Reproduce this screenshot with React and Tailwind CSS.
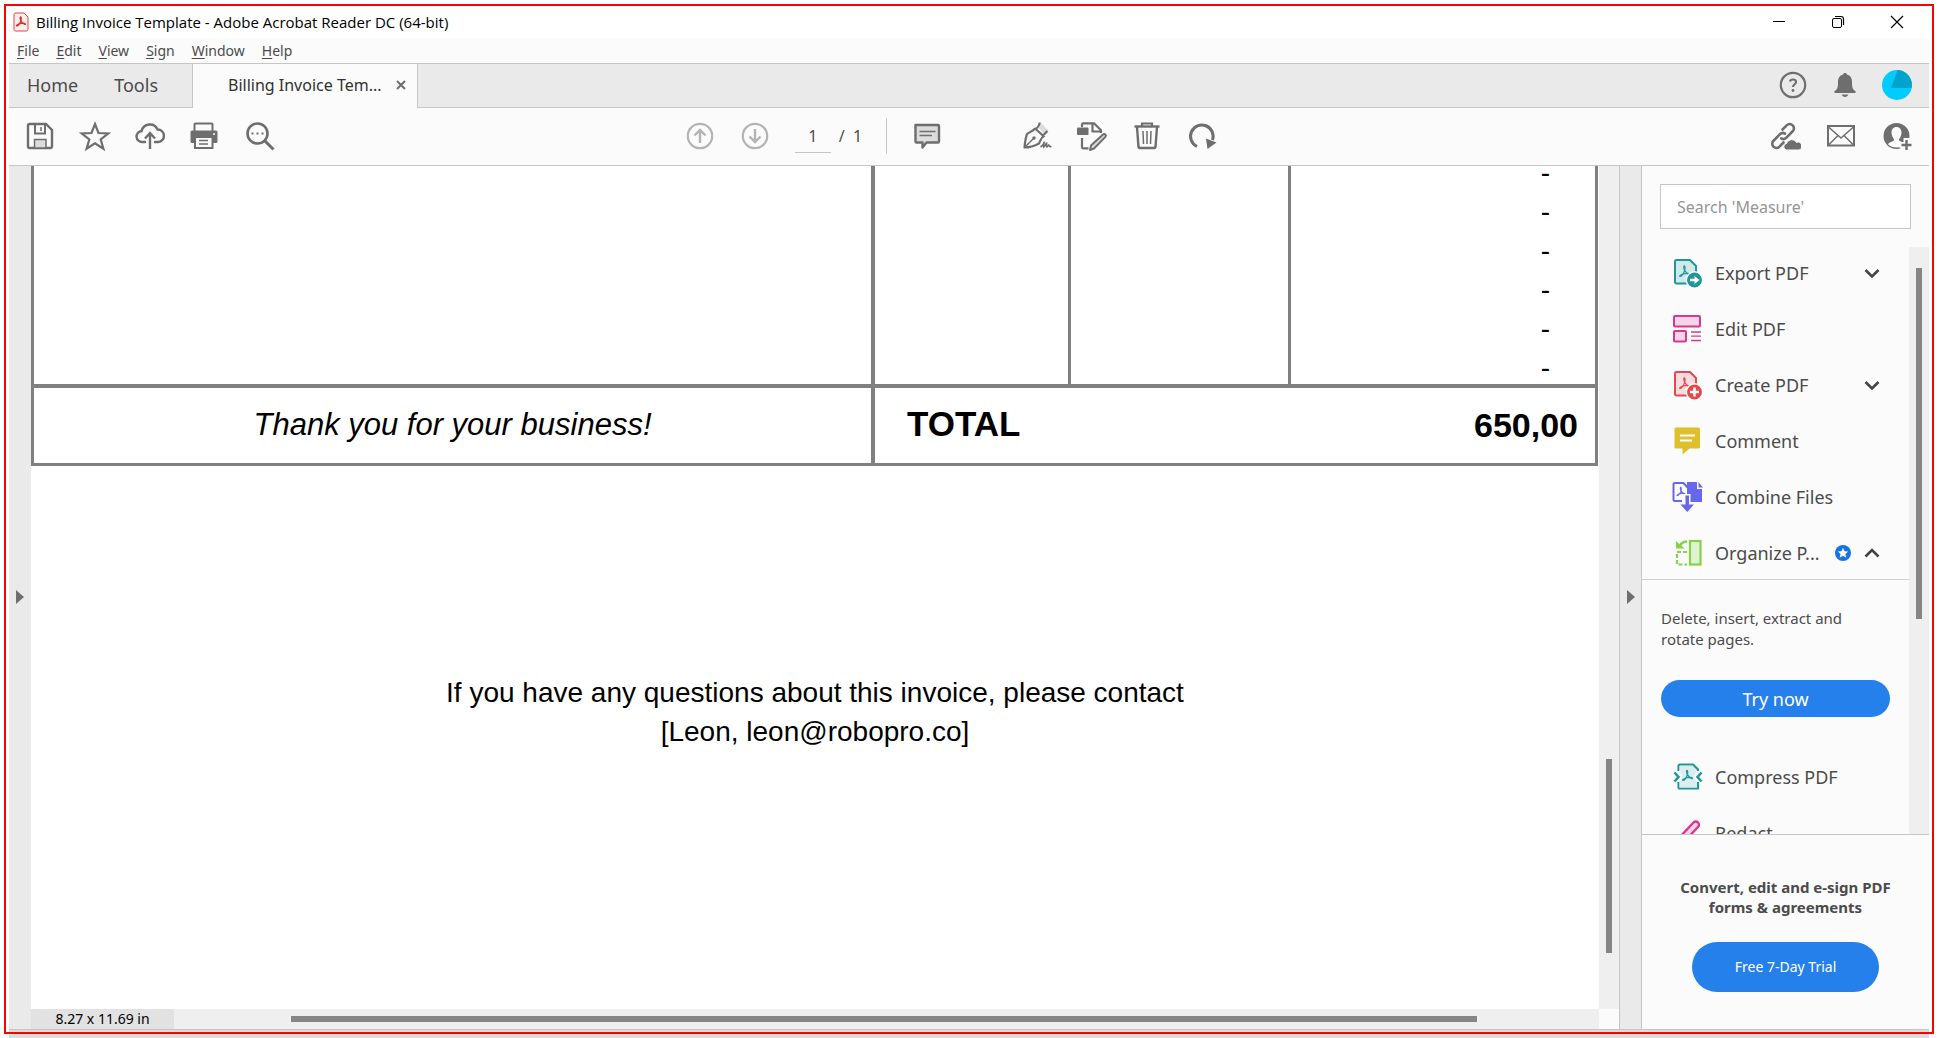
import React from "react";

const Svg = ({ size = 32, children, className = "" }) => (
  <svg
    width={size}
    height={size}
    viewBox={`0 0 ${size} ${size}`}
    fill="none"
    stroke="currentColor"
    strokeWidth="2"
    className={`shrink-0 ${className}`}
    aria-hidden="true"
  >
    {children}
  </svg>
);

const Trefoil = ({ x = 0, y = 0, s = 1, width = 1.5 }) => (
  <path
    transform={`translate(${x} ${y}) scale(${s})`}
    strokeWidth={width}
    strokeLinejoin="round"
    strokeLinecap="round"
    d="M5.6 0.5C4.6 0.6 5.2 3.4 6 5.2C4.8 8.4 2.6 11.6 0.9 11.5C0 10.9 3 9 6.2 8.5C8.6 8 11.6 8.2 11.5 9.3C10.8 10.4 7.6 7.8 6 5.2C6.4 3.4 6.6 0.6 5.6 0.5Z"
  />
);

/* ---------- toolbar icons ---------- */

const SaveIcon = () => (
  <Svg>
    <path d="M4 5.500A1.500 1.500 0 0 1 5.500 4H22l6 6v16.500A1.500 1.500 0 0 1 26.500 28h-21A1.500 1.500 0 0 1 4 26.500Z" strokeWidth="2.400" />
    <path d="M11 4v9.500h10V4" />
    <path d="M17 7v4" strokeWidth="1.500" />
    <path d="M10.500 28v-8.500h11.500V28Z" fill="#dcdcdc" strokeWidth="1.500" />
  </Svg>
);

const StarIcon = () => (
  <Svg>
    <path d="M16 4l3.500 9 10 .4-7.800 6.100 2.700 9.300L16 23.400l-8.400 5.400 2.700-9.300-7.800-6.100 10-.4Z" strokeWidth="2.200" />
  </Svg>
);

const CloudUpIcon = () => (
  <Svg>
    <path d="M11 22H8.500A5.500 5.500 0 0 1 7.600 11A8.500 8.500 0 0 1 23.600 9.500A6.200 6.200 0 0 1 23.800 22H21" strokeLinecap="round" strokeWidth="2.400" />
    <path d="M16 29V13.500M11 18.500l5-5.500 5 5.500" strokeWidth="2.400" />
  </Svg>
);

const PrinterIcon = () => (
  <Svg>
    <g transform="translate(-1 0)">
      <path d="M6.500 12V4.500a1 1 0 0 1 1-1h16a1 1 0 0 1 1 1V12" />
      <path d="M4 10.500h24a1.500 1.500 0 0 1 1.500 1.500v9.500a1.500 1.500 0 0 1-1.500 1.500H4A1.500 1.500 0 0 1 2.500 21.500V12A1.500 1.500 0 0 1 4 10.500Z" fill="currentColor" stroke="none" />
      <rect x="7" y="17" width="17.500" height="11" fill="#fbfbfb" />
      <path d="M11 20.500h9M11 24h9" strokeWidth="1.500" />
      <circle cx="26" cy="14" r="1" fill="#fbfbfb" stroke="none" />
    </g>
  </Svg>
);

const SearchDotsIcon = () => (
  <Svg>
    <circle cx="13.500" cy="13.500" r="10" strokeWidth="2.600" />
    <path d="M21 21l8.500 8.500" strokeWidth="3" />
    <path d="M7.500 13.500h2M12.500 13.500h2M17.500 13.500h2" />
  </Svg>
);

const ArrowCircle = ({ down }) => (
  <Svg>
    <circle cx="16" cy="16" r="12.200" strokeWidth="2.200" />
    <g transform={down ? "rotate(180 16 16)" : undefined}>
      <path d="M16 23V9.500M10.500 15.500L16 10l5.500 5.500" strokeWidth="2.400" />
    </g>
  </Svg>
);

const CommentIcon = () => (
  <Svg>
    <path d="M4.500 5h22.500a1 1 0 0 1 1 1v15.500a1 1 0 0 1-1 1H15.500L11.500 27.500V22.500H5.500a1 1 0 0 1-1-1Z" fill="#dcdcdc" strokeWidth="2.400" strokeLinejoin="round" />
    <path d="M8.500 11.500h16M8.500 15.500h12.500" strokeWidth="1.500" />
  </Svg>
);

const PenIcon = () => (
  <Svg>
    <path d="M20 3l7.500 7.500-4 3.500-6-6Z" fill="#dcdcdc" stroke="none" />
    <path d="M18.500 2.500C18.800 5 17 7 15 9M14 8.500C11.500 11.500 8.500 12 6 14C4.500 18 4 22 3.500 27.500C9 27.500 13.500 26 18 23.500C19.500 20.500 20 18 22.500 16M13.500 8l10 9M22 15.500l4.500-4.500" strokeWidth="2.200" strokeLinejoin="round" />
    <path d="M4 27l8.500-8.500" strokeWidth="1.500" />
    <circle cx="13" cy="18" r="1.700" fill="currentColor" stroke="none" />
    <path d="M19.500 27c2-1 3.500-3.500 3.800-5.500c-.3 2-.8 4-.6 5.500c1.500-1 2.500-3 3-4.500c-.2 2-.3 3.500.2 4.500c1-.5 1.500-1.500 2-2.500c0 1.500.5 2.500 2.600 2" strokeWidth="1.600" />
  </Svg>
);

const EditDocIcon = () => (
  <Svg>
    <rect x="1" y="7.500" width="11.500" height="7.500" rx="1" fill="currentColor" stroke="none" />
    <path d="M6 7V4.500A1.200 1.200 0 0 1 7.200 3.300H18l7 7V13M16.500 3.500V11.500H25M6 18v9.300a1 1 0 0 0 1 1h5.500" strokeLinejoin="round" strokeWidth="2.200" />
    <path d="M15 25.500l12-11a1.700 1.700 0 0 1 2.400 2.400L18 28.500l-4 1.500Z" strokeLinejoin="round" fill="#dcdcdc" />
  </Svg>
);

const TrashIcon = () => (
  <Svg>
    <path d="M3.500 6.500h25" strokeWidth="2.400" />
    <path d="M11 6V3.500h10V6" strokeWidth="2.200" />
    <path d="M6 7l1.500 20a1.200 1.200 0 0 0 1.200 1h14.600a1.200 1.200 0 0 0 1.200-1L26 7" strokeWidth="2.400" />
    <path d="M12 11l.5 13M16 11v13M20 11l-.5 13" strokeWidth="1.500" />
  </Svg>
);

const RotateIcon = () => (
  <Svg>
    <path d="M11 26.500A11.300 11.300 0 1 1 26.500 20" strokeWidth="3" />
    <path d="M20 18.500l10.500 4L21.500 29Z" fill="currentColor" stroke="none" />
  </Svg>
);

const LinkCloudIcon = () => (
  <Svg>
    <g strokeWidth="2.600" strokeLinecap="round">
      <path d="M13.500 9.500l4.200-4.200a4.200 4.200 0 0 1 6 0a4.200 4.200 0 0 1 0 6l-6.500 6.500a4.200 4.200 0 0 1-5 .6" />
      <path d="M14.500 22.500l-4 4.200a4.200 4.200 0 0 1-6 0a4.200 4.200 0 0 1 0-6l6.500-6.500a4.200 4.200 0 0 1 5-.6" />
    </g>
    <path d="M17.500 30a3.300 3.300 0 0 1 0-6.500a5.500 5.500 0 0 1 10-1.200a4 4 0 0 1 2.500 7.700Z" fill="currentColor" stroke="#fbfbfb" strokeWidth="1" />
  </Svg>
);

const MailIcon = () => (
  <Svg>
    <rect x="3" y="6" width="26" height="19.500" />
    <path d="M3.500 7l12.500 11L28.500 7M3.500 25l9.500-9.500M28.500 25L19 15.500" strokeWidth="1.500" />
  </Svg>
);

const UserPlusIcon = () => (
  <Svg>
    <circle cx="15.500" cy="16" r="13" fill="currentColor" stroke="none" />
    <path d="M15.500 7c3.300 0 5 2.500 5 5.700c0 2.500-1.200 4.800-2.300 6.200c-.5 1.200.2 1.800 1.200 2.300c2 .9 4 1.600 4.600 3A12.500 12.500 0 0 1 7 24.200c.6-1.400 2.600-2.100 4.600-3c1-.5 1.700-1.100 1.200-2.300c-1.100-1.400-2.300-3.700-2.300-6.200C10.500 9.500 12.200 7 15.500 7Z" fill="#fbfbfb" stroke="none" />
    <path d="M25.500 18v14M18.500 25h13" stroke="#fbfbfb" strokeWidth="6" />
    <path d="M25.500 20v10M20.500 25h10" strokeWidth="2.400" />
  </Svg>
);

/* ---------- side panel icons ---------- */

const Doc = ({ fill }) => (
  <>
    <path d="M3 4.500A1.500 1.500 0 0 1 4.500 3H18l6 6v17.500H4.500A1.500 1.500 0 0 1 3 25Z" fill={fill} strokeLinejoin="round" />
    <Trefoil x={7} y={8.500} s={0.95} width={1.300} />
  </>
);

const ExportIcon = () => (
  <Svg className="text-[#1f979b]">
    <Doc fill="#d0e9e9" />
    <circle cx="22.500" cy="23" r="8.200" fill="currentColor" stroke="#fbfbfb" strokeWidth="1.500" />
    <path d="M18 21.700h4.500v-2.700l5 4-5 4v-2.700H18Z" fill="#fff" stroke="none" />
  </Svg>
);

const CreateIcon = () => (
  <Svg className="text-[#e34850]">
    <Doc fill="#f9dcdd" />
    <circle cx="22.500" cy="23" r="8.200" fill="currentColor" stroke="#fbfbfb" strokeWidth="1.500" />
    <path d="M22.500 18.500v9M18 23h9" stroke="#fff" strokeWidth="2.400" />
  </Svg>
);

const EditIcon = () => (
  <Svg className="text-[#d83790]">
    <rect x="2" y="3" width="26" height="10.500" rx="1" fill="#f6d3e6" />
    <rect x="2" y="18" width="12" height="10.500" rx="1" fill="#f6d3e6" />
    <path d="M19 19h10M19 23.200h10M19 27.500h10" strokeWidth="1.300" />
  </Svg>
);

const CommentToolIcon = () => (
  <Svg className="text-[#dfbf2c]">
    <path d="M4 2.500h22.500A1.500 1.500 0 0 1 28 4v18a1.500 1.500 0 0 1-1.500 1.500H17.500L10.500 29.500V23.500H4A1.500 1.500 0 0 1 2.500 22V4A1.500 1.500 0 0 1 4 2.500Z" fill="currentColor" stroke="none" />
    <path d="M8 10.500h15M8 15.500h12" stroke="#fff" />
  </Svg>
);

const CombineIcon = () => (
  <Svg className="text-[#6767ec]">
    <g transform="translate(-1 0)">
      <path d="M16 1h10v7h5v13H19L16 10Z" fill="currentColor" stroke="none" />
      <path d="M27.500 1v5.500H32Z" fill="currentColor" stroke="none" />
      <path d="M11 20H4a1.500 1.500 0 0 1-1.500-1.500V3.500A1.500 1.500 0 0 1 4 2h8.500l4.500 5v7" fill="#fbfbfb" />
      <Trefoil x={5.500} y={6} s={0.75} width={1.500} />
      <path d="M12.500 13h7v9h5L16 32.500 7.500 22h5Z" fill="#fbfbfb" stroke="none" />
      <path d="M14.500 14.500h3.500v9h5L16.200 31 9.500 23.500h5Z" fill="currentColor" stroke="none" />
    </g>
  </Svg>
);

const OrganizeIcon = () => (
  <Svg className="text-[#87d14b]">
    <rect x="18" y="4" width="10.500" height="23.500" fill="#e0f3d0" strokeWidth="2.200" />
    <path d="M15 15H5v12.500h10" strokeDasharray="4 2" strokeWidth="2.200" />
    <path d="M15 4.500c-3.500 0-5.500 1.500-7 4" strokeWidth="2.600" />
    <path d="M4 4v7.500h8.500Z" fill="currentColor" stroke="none" />
  </Svg>
);

const CompressIcon = () => (
  <Svg className="text-[#1f979b]">
    <path d="M6.500 10V5A1.500 1.500 0 0 1 8 3.500h13l5 5V10M26 21v6.500H8A1.500 1.500 0 0 1 6.500 26v-5" strokeWidth="2.200" />
    <path d="M7.500 5h13l4.500 4.500L22 16l3 5v5.500H7.500V21l3-5-3-6Z" fill="#dbedee" stroke="none" />
    <Trefoil x={10} y={9} s={0.9} width={1.500} />
    <path d="M2.500 11.500l4 4.500-4 4.500M29.500 11.500l-4 4.500 4 4.500" strokeWidth="2.600" />
  </Svg>
);

const RedactIcon = () => (
  <Svg className="text-[#d83790]">
    <path d="M6 22L21.500 5.500a3 3 0 0 1 4.500 4.500L10.500 26.500 4.500 28Z" fill="#f6d3e6" strokeWidth="2.400" />
  </Svg>
);

const Chevron = ({ up }) => (
  <Svg size={16} className="text-[#444]">
    <path d={up ? "M1.500 11.500L8 5l6.500 6.500" : "M1.500 5L8 11.500 14.500 5"} strokeWidth="2.600" />
  </Svg>
);

const AppIcon = () => (
  <svg width="16" height="20" viewBox="0 0 16 20" fill="none" stroke="#e8403a" className="shrink-0" aria-hidden="true">
    <path d="M1 2.500A1.500 1.500 0 0 1 2.500 1H11l4 4v12.500a1.500 1.500 0 0 1-1.500 1.500h-11A1.500 1.500 0 0 1 1 17.500Z" fill="#fdeeee" />
    <g stroke="#e22a24">
      <Trefoil x={3} y={4.500} s={0.82} width={1.600} />
    </g>
  </svg>
);

const IconButton = ({ label, children, className = "" }) => (
  <button type="button" aria-label={label} className={`flex w-8 shrink-0 items-center justify-center ${className}`}>
    {children}
  </button>
);

const MENUS = ["File", "Edit", "View", "Sign", "Window", "Help"];

const Tool = ({ icon, label, children }) => (
  <li>
    <button type="button" className="flex h-14 w-full items-center text-left text-[18px] leading-6 text-[#4b4b4b]">
      {icon}
      <span className="ml-[11px] flex-1 whitespace-nowrap">{label}</span>
      {children}
    </button>
  </li>
);

function TitleBar() {
  return (
    <header className="flex h-8 shrink-0 items-center bg-white pr-4 pl-1">
      <AppIcon />
      <h1 className="ml-[7px] flex-1 font-['Open_Sans','Noto_Sans',sans-serif] text-[15px] leading-5 text-black">
        Billing Invoice Template - Adobe Acrobat Reader DC (64-bit)
      </h1>
      <div className="flex gap-[27px] text-black">
        <IconButton label="Minimize">
          <Svg size={16}><path d="M2 7.500h12" strokeWidth="1" /></Svg>
        </IconButton>
        <IconButton label="Restore">
          <Svg size={16}>
            <rect x="2.500" y="4.500" width="9" height="9" rx="1.500" strokeWidth="1" />
            <path d="M5 2.500h6a2.500 2.500 0 0 1 2.500 2.500v6" strokeWidth="1.200" />
          </Svg>
        </IconButton>
        <IconButton label="Close">
          <Svg size={16}><path d="M2 2l12 12M14 2L2 14" strokeWidth="1.200" /></Svg>
        </IconButton>
      </div>
    </header>
  );
}

function TabBar() {
  return (
    <div className="flex h-[45px] shrink-0 border-y border-[#c6c6c6] bg-[#eaeaea]">
      <nav className="flex w-[183px] items-center gap-9 pb-0.5 pl-[18px] text-[18px] leading-6 text-[#4b4b4b]">
        <button type="button">Home</button>
        <button type="button">Tools</button>
      </nav>
      <div className="-mb-px flex w-[226px] items-center border-x border-[#c6c6c6] bg-[#fbfbfb] pr-2.5 pb-0.5 pl-[35px]">
        <span className="flex-1 whitespace-nowrap text-[16px] leading-6 text-[#323232]">Billing Invoice Tem...</span>
        <button type="button" aria-label="Close tab" className="text-[#6e6e6e]">
          <Svg size={12}><path d="M2 2l8 8M10 2l-8 8" /></Svg>
        </button>
      </div>
      <div className="ml-auto flex items-center gap-5 pr-4 pb-px text-[#6e6e6e]">
        <IconButton label="Help">
          <Svg>
            <circle cx="16" cy="16" r="12.200" strokeWidth="2.200" />
            <path d="M13 12.500c.3-1.300 1.500-2 3-2s3 .9 3 2.500c0 2.300-3 2.300-3 5" strokeWidth="2.200" />
            <circle cx="16" cy="21.500" r="1.400" fill="currentColor" stroke="none" />
          </Svg>
        </IconButton>
        <IconButton label="Notifications">
          <Svg>
            <path d="M16 4c1.300 0 1.800.7 1.900 1.600C21.500 6.500 23 9.500 23 13c0 5.500.5 7.500 3.500 9v2h-21v-2C8.500 20.500 9 18.500 9 13c0-3.500 1.500-6.500 5.100-7.400C14.200 4.700 14.700 4 16 4ZM12.500 25.500h7c-.8 1.500-2 2.500-3.500 2.500s-2.700-1-3.500-2.500Z" fill="currentColor" stroke="none" />
          </Svg>
        </IconButton>
        <IconButton label="Account">
          <Svg>
            <circle cx="16" cy="16" r="15" fill="#00cdfd" stroke="none" />
            <path d="M16.500 1A15 15 0 0 1 30.500 19L28.500 19H10Z" fill="#00a3cb" stroke="none" />
          </Svg>
        </IconButton>
      </div>
    </div>
  );
}

function Toolbar() {
  return (
    <div className="flex h-[58px] shrink-0 items-center border-b border-[#c6c6c6] bg-[#fbfbfb] pr-4 pb-px pl-[15px] text-[#6e6e6e]">
      <div className="flex gap-[23px]">
        <IconButton label="Save"><SaveIcon /></IconButton>
        <IconButton label="Star"><StarIcon /></IconButton>
        <IconButton label="Upload"><CloudUpIcon /></IconButton>
        <IconButton label="Print"><PrinterIcon /></IconButton>
        <IconButton label="Find"><SearchDotsIcon /></IconButton>
      </div>
      <div className="grow-[409]" />
      <div className="flex items-center">
        <div className="flex gap-[23px] text-[#b4b4b4]">
          <IconButton label="Previous page"><ArrowCircle /></IconButton>
          <IconButton label="Next page"><ArrowCircle down /></IconButton>
        </div>
        <label className="ml-6 flex items-center text-[16px] leading-6 text-[#4b4b4b]">
          <input
            aria-label="Page number"
            defaultValue="1"
            className="h-[34px] w-9 border-b border-[#c6c6c6] bg-transparent text-center outline-none"
          />
          <span className="ml-2 w-[47px] whitespace-pre">/  1</span>
        </label>
        <div className="h-9 w-px bg-[#c6c6c6]" />
        <div className="ml-6"><IconButton label="Comment"><CommentIcon /></IconButton></div>
        <div className="ml-[78px] flex gap-[23px]">
          <IconButton label="Fill and sign"><PenIcon /></IconButton>
          <IconButton label="Edit document"><EditDocIcon /></IconButton>
          <IconButton label="Delete"><TrashIcon /></IconButton>
          <IconButton label="Rotate"><RotateIcon /></IconButton>
        </div>
      </div>
      <div className="grow-[553]" />
      <div className="flex gap-6">
        <IconButton label="Share link"><LinkCloudIcon /></IconButton>
        <IconButton label="Send by email"><MailIcon /></IconButton>
        <IconButton label="Invite people"><UserPlusIcon /></IconButton>
      </div>
    </div>
  );
}

function Invoice() {
  const amounts = ["-", "-", "-", "-", "-", "-"];
  return (
    <main className="min-h-0 flex-1 overflow-hidden bg-white font-['Liberation_Sans',Arial,sans-serif] text-black">
      <div className="-mt-4 pr-px">
        <table className="w-full table-fixed border-separate border-spacing-0 border-r-3 border-b-3 border-[#808080]">
          <colgroup>
            <col />
            <col className="w-[197px]" />
            <col className="w-[220px]" />
            <col className="w-[307px]" />
          </colgroup>
          <tbody>
            {amounts.map((amount, i) => (
              <tr key={i} className="h-[39px] text-[28px] leading-[33px]">
                <td className="border-l-3 border-[#808080] p-0" />
                <td className="border-l-4 border-[#808080] p-0" />
                <td className="border-l-3 border-[#808080] p-0" />
                <td className="border-l-3 border-[#808080] pt-1.5 pr-[45px] pb-0 pl-0 text-right">{amount}</td>
              </tr>
            ))}
            <tr className="h-[79px]">
              <td className="border-t-4 border-l-3 border-[#808080] px-0 pt-0 pb-0.5 text-center text-[31px] leading-9 italic">
                Thank you for your business!
              </td>
              <td colSpan={2} className="border-t-4 border-l-4 border-[#808080] pt-0 pr-0 pb-1 pl-8 text-[35px] leading-9 font-bold">
                TOTAL
              </td>
              <td className="border-t-4 border-[#808080] pt-0 pr-[17px] pb-0.5 pl-0 text-right text-[34px] leading-9 font-bold">
                650,00
              </td>
            </tr>
          </tbody>
        </table>
      </div>
      <p className="mt-[207px] text-center text-[28px] leading-[39px]">
        If you have any questions about this invoice, please contact
        <br />
        [Leon, leon@robopro.co]
      </p>
    </main>
  );
}

function SidePanel() {
  return (
    <aside className="flex w-[287px] shrink-0 flex-col bg-[#fbfbfb]">
      <div className="p-[18px]">
        <input
          type="search"
          aria-label="Search tools"
          placeholder="Search 'Measure'"
          className="h-[45px] w-full border border-[#c6c6c6] bg-white px-4 text-[16px] text-[#4b4b4b] outline-none placeholder:text-[#959595]"
        />
      </div>
      <div className="flex min-h-0 flex-1">
        <div className="min-w-0 flex-1 overflow-hidden">
          <ul className="-mt-0.5 border-b border-[#d0d0d0] pr-[29px] pl-[30px] [&>li:last-child]:-mb-0.5">
            <Tool icon={<ExportIcon />} label="Export PDF"><Chevron /></Tool>
            <Tool icon={<EditIcon />} label="Edit PDF" />
            <Tool icon={<CreateIcon />} label="Create PDF"><Chevron /></Tool>
            <Tool icon={<CommentToolIcon />} label="Comment" />
            <Tool icon={<CombineIcon />} label="Combine Files" />
            <Tool icon={<OrganizeIcon />} label="Organize P...">
              <Svg size={16} className="mr-[13px]">
                <circle cx="8" cy="8" r="8" fill="#1473e6" stroke="none" />
                <path d="M8 2.800l1.500 3.500 3.700.3-2.800 2.500.9 3.700L8 10.800l-3.300 2 .9-3.700L2.800 6.600l3.700-.3Z" fill="#fff" stroke="none" />
              </Svg>
              <Chevron up />
            </Tool>
          </ul>
          <div className="pt-7 pr-[19px] pb-8 pl-[19px]">
            <p className="text-[15px] leading-[21px] text-[#4b4b4b]">
              Delete, insert, extract and
              <br />
              rotate pages.
            </p>
            <button type="button" className="mt-[30px] h-[37px] w-full rounded-full bg-[#2680eb] text-[18px] leading-6 text-white">
              Try now
            </button>
          </div>
          <ul className="pr-[29px] pl-[30px]">
            <Tool icon={<CompressIcon />} label="Compress PDF" />
            <Tool icon={<RedactIcon />} label="Redact" />
          </ul>
        </div>
        <div className="flex w-5 shrink-0 justify-center bg-[#efefef] pt-[21px]">
          <div className="h-[62%] w-1.5 bg-[#858585]" />
        </div>
      </div>
      <section className="flex shrink-0 flex-col items-center border-t border-[#c6c6c6] pt-[42px] pb-[37px]">
        <p className="text-center text-[15px] leading-5 font-bold text-[#4b4b4b]">
          Convert, edit and e-sign PDF
          <br />
          forms &amp; agreements
        </p>
        <button type="button" className="mt-[25px] h-[50px] w-[187px] rounded-full bg-[#2680eb] text-[14px] leading-5 text-white">
          Free 7-Day Trial
        </button>
      </section>
    </aside>
  );
}

const Collapser = ({ label, className }) => (
  <button type="button" aria-label={label} className={`flex shrink-0 items-center justify-center bg-[#eaeaea] pb-0.5 ${className}`}>
    <svg width="8" height="14" viewBox="0 0 8 14" fill="#6e6e6e" aria-hidden="true"><path d="M0 0l8 7-8 7Z" /></svg>
  </button>
);

export default function App() {
  return (
    <div className="relative flex h-screen flex-col overflow-hidden bg-white px-[9px] pt-1.5 font-['Noto_Sans','Open_Sans',sans-serif]">
      <TitleBar />
      <nav className="flex h-[25px] shrink-0 items-center gap-[17px] bg-[#fbfbfb] pl-2 text-[14px] leading-5 text-[#4b4b4b]">
        {MENUS.map((m) => (
          <button type="button" key={m}>
            <span className="underline underline-offset-2">{m[0]}</span>
            {m.slice(1)}
          </button>
        ))}
      </nav>
      <TabBar />
      <Toolbar />
      <div className="flex min-h-0 flex-1">
        <Collapser label="Show navigation pane" className="w-[22px]" />
        <div className="flex min-w-0 flex-1 flex-col">
          <div className="flex min-h-0 flex-1">
            <Invoice />
            <div className="flex w-5 shrink-0 flex-col items-center bg-[#efefef]">
              <div className="grow-[593]" />
              <div className="w-1.5 grow-[194] bg-[#858585]" />
              <div className="grow-[56]" />
            </div>
          </div>
          <div className="flex h-5 shrink-0 items-center bg-[#efefef]">
            <div className="flex h-5 w-[143px] items-center justify-center bg-[#e2e2e2] text-[14px] leading-5 text-black">
              8.27 x 11.69 in
            </div>
            <div className="flex flex-1">
              <div className="grow-[117]" />
              <div className="h-1.5 grow-[1186] bg-[#858585]" />
              <div className="grow-[122]" />
            </div>
            <div className="h-5 w-5 bg-[#fbfbfb]" />
          </div>
        </div>
        <Collapser label="Hide tools pane" className="w-[23px] border-x border-[#c6c6c6]" />
        <SidePanel />
      </div>
      <div className="h-[9px] shrink-0 border-t border-[#c6c6c6] bg-[#dcdcdc]" />
      <div className="pointer-events-none absolute inset-1 border-2 border-[#ff0000]" />
    </div>
  );
}
